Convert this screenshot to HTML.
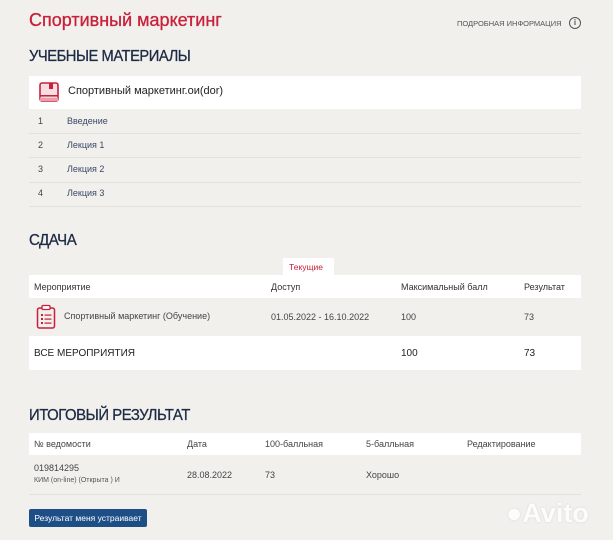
<!DOCTYPE html>
<html><head><meta charset="utf-8"><style>
body{margin:0;width:613px;height:540px;background:#f1f0ed;font-family:"Liberation Sans","DejaVu Sans",sans-serif;position:relative;overflow:hidden;color:#333}
.a{position:absolute;white-space:nowrap}
.h{font-size:16px;color:#1d2a44;letter-spacing:-0.5px;transform-origin:0 0;-webkit-text-stroke:0.3px #1d2a44}
.w{position:absolute;background:#fff}
.ln{position:absolute;height:1px;background:#e2e1dd;left:29px;width:552px}
.s{font-size:9px;color:#444}
.l{font-size:9px;color:#3a4a6a}
</style></head><body>
<div class="a" style="left:29px;top:10px;font-size:18px;color:#c8203a;-webkit-text-stroke:0.3px #c8203a">Спортивный маркетинг</div>
<div class="a" style="left:457px;top:19px;font-size:7.5px;color:#555">ПОДРОБНАЯ ИНФОРМАЦИЯ</div>
<div class="a" style="left:569px;top:17px;width:10px;height:10px;border:1.3px solid #555;border-radius:50%;font-size:8px;text-align:center;line-height:10px;color:#555;font-weight:bold">i</div>

<div class="a h" style="left:29px;top:48px;transform:scaleX(0.92)">УЧЕБНЫЕ МАТЕРИАЛЫ</div>
<div class="w" style="left:29px;top:76px;width:552px;height:33px"></div>
<svg class="a" style="left:39px;top:82px" width="20" height="20" viewBox="0 0 20 20"><rect x="1" y="1" width="18" height="18" rx="2" fill="none" stroke="#c8203a" stroke-width="1.6"/><rect x="1" y="13" width="18" height="1.6" fill="#c8203a"/><rect x="1" y="15.5" width="18" height="3.5" fill="#e7a0ab"/><rect x="10" y="1" width="4" height="6" fill="#c8203a"/><rect x="1" y="1" width="18" height="12" fill="#c8203a" opacity="0.15"/></svg>
<div class="a" style="left:68px;top:85px;font-size:11px;color:#222">Спортивный маркетинг.ои(dor)</div>
<div class="a s" style="left:38px;top:116px">1</div><div class="a l" style="left:67px;top:116px">Введение</div>
<div class="ln" style="top:133px"></div>
<div class="a s" style="left:38px;top:140px">2</div><div class="a l" style="left:67px;top:140px">Лекция 1</div>
<div class="ln" style="top:157px"></div>
<div class="a s" style="left:38px;top:164px">3</div><div class="a l" style="left:67px;top:164px">Лекция 2</div>
<div class="ln" style="top:182px"></div>
<div class="a s" style="left:38px;top:188px">4</div><div class="a l" style="left:67px;top:188px">Лекция 3</div>
<div class="ln" style="top:206px"></div>

<div class="a h" style="left:29px;top:232px;transform:scaleX(0.94)">СДАЧА</div>
<div class="w" style="left:283px;top:258px;width:51px;height:18px"></div>
<div class="a" style="left:289px;top:262px;font-size:8.5px;color:#c8203a">Текущие</div>
<div class="w" style="left:29px;top:275px;width:552px;height:23px"></div>
<div class="a s" style="left:34px;top:282px;color:#333">Мероприятие</div>
<div class="a s" style="left:271px;top:282px;color:#333">Доступ</div>
<div class="a s" style="left:401px;top:282px;color:#333">Максимальный балл</div>
<div class="a s" style="left:524px;top:282px;color:#333">Результат</div>
<svg class="a" style="left:36px;top:304px" width="20" height="25" viewBox="0 0 20 25"><rect x="1.5" y="4" width="17" height="20" rx="2" fill="none" stroke="#c8203a" stroke-width="1.5"/><rect x="6" y="1.5" width="8" height="4" rx="1" fill="#fff" stroke="#c8203a" stroke-width="1.3"/><g fill="#c8203a"><rect x="5" y="10" width="2" height="2"/><rect x="5" y="14" width="2" height="2"/><rect x="5" y="18" width="2" height="2"/><rect x="8.5" y="10.5" width="7" height="1.2"/><rect x="8.5" y="14.5" width="7" height="1.2"/><rect x="8.5" y="18.5" width="7" height="1.2"/></g></svg>
<div class="a s" style="left:64px;top:311px">Спортивный маркетинг (Обучение)</div>
<div class="a s" style="left:271px;top:312px">01.05.2022 - 16.10.2022</div>
<div class="a s" style="left:401px;top:312px">100</div>
<div class="a s" style="left:524px;top:312px">73</div>
<div class="w" style="left:29px;top:336px;width:552px;height:34px"></div>
<div class="a" style="left:34px;top:348px;font-size:10px;color:#222">ВСЕ МЕРОПРИЯТИЯ</div>
<div class="a" style="left:401px;top:348px;font-size:10px;color:#222">100</div>
<div class="a" style="left:524px;top:348px;font-size:10px;color:#222">73</div>

<div class="a h" style="left:29px;top:407px;transform:scaleX(0.93)">ИТОГОВЫЙ РЕЗУЛЬТАТ</div>
<div class="w" style="left:29px;top:433px;width:552px;height:22px"></div>
<div class="a s" style="left:34px;top:439px">№ ведомости</div>
<div class="a s" style="left:187px;top:439px">Дата</div>
<div class="a s" style="left:265px;top:439px">100-балльная</div>
<div class="a s" style="left:366px;top:439px">5-балльная</div>
<div class="a s" style="left:467px;top:439px">Редактирование</div>
<div class="a s" style="left:34px;top:463px">019814295</div>
<div class="a" style="left:34px;top:477px;font-size:7px;color:#555">КИМ (on-line) (Открыта ) И</div>
<div class="a s" style="left:187px;top:470px">28.08.2022</div>
<div class="a s" style="left:265px;top:470px">73</div>
<div class="a s" style="left:366px;top:470px">Хорошо</div>
<div class="ln" style="top:494px"></div>
<div class="a" style="left:29px;top:509px;width:118px;height:18px;background:#1d4f86;border-radius:2px;color:#fff;font-size:8.5px;text-align:center;line-height:18px">Результат меня устраивает</div>
<div class="a" style="left:506px;top:498px;font-size:27px;font-weight:bold;color:#fff;opacity:0.8;text-shadow:0 0 2px #ccc">●Avito</div>
</body></html>
